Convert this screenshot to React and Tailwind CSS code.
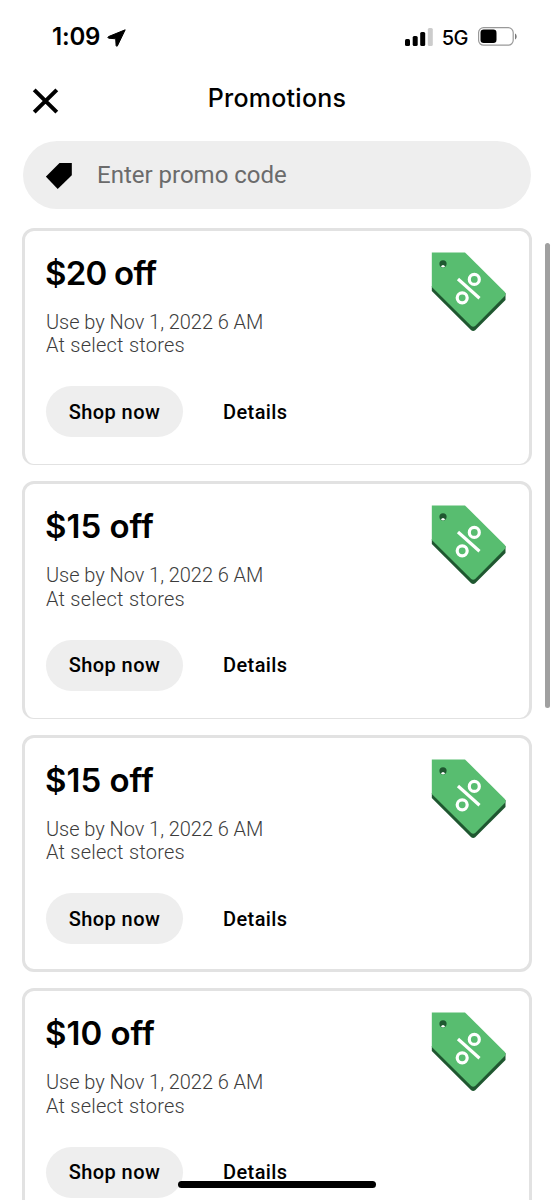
import { clsx } from 'clsx';

const promos = [
    { id: 1, title: '$20 off', tracking: 'tracking-[-0.75px]', expires: 'Use by Nov 1, 2022 6 AM', scope: 'At select stores' },
    { id: 2, title: '$15 off', tracking: 'tracking-[0px]', expires: 'Use by Nov 1, 2022 6 AM', scope: 'At select stores' },
    { id: 3, title: '$15 off', tracking: 'tracking-[0px]', expires: 'Use by Nov 1, 2022 6 AM', scope: 'At select stores' },
    { id: 4, title: '$10 off', tracking: 'tracking-[0px]', expires: 'Use by Nov 1, 2022 6 AM', scope: 'At select stores' },
];

// --- ICONS ---
const LocationArrow = () => (
    <svg className="ml-[7px] mt-[1px] h-5 w-5" viewBox="0 0 20 20">
        <path
            d="M18.2 1.8 10.4 17.9Q9.6 18.9 9.1 17.6L8.7 10.8 1.6 10.2Q.2 9.5 1.5 8.6Z"
            stroke="#000"
            strokeWidth="1"
            strokeLinejoin="round"
        />
    </svg>
);

const SignalBars = () => (
    <svg className="h-[18px] w-7" viewBox="0 0 28 18">
        <rect x="0" y="11" width="5" height="7" rx="1.5" />
        <rect x="7.7" y="8" width="5" height="10" rx="1.5" />
        <rect x="15.2" y="4" width="5" height="14" rx="1.5" />
        <rect x="22.8" y="0" width="5" height="18" rx="1.5" fill="#cccccc" />
    </svg>
);

const Battery = () => (
    <svg className="h-[19px] w-[39px]" viewBox="0 0 39 19">
        <rect x="0.6" y="0.6" width="34.6" height="17.6" rx="5" fill="none" stroke="#999999" strokeWidth="1.2" />
        <rect x="2.5" y="2.6" width="16" height="13.4" rx="3.2" />
        <path d="M37 6.4c2.2 1 2.2 5.2 0 6.2Z" fill="#777777" />
    </svg>
);

const CloseIcon = () => (
    <svg className="h-7 w-7" viewBox="0 0 28 28" fill="none" stroke="#000" strokeWidth="4">
        <path d="M3.2 2.8 25.8 25.2M25.8 2.8 3.2 25.2" />
    </svg>
);

const TagIcon = () => (
    <svg className="h-[27px] w-[27px]" viewBox="0 0 27 27">
        <path d="M13.5 1H25.8V13.3L11.7 27-.2 14.6Z" />
    </svg>
);

const PromoTag = () => (
    <svg className="h-[81px] w-[76px] shrink-0" viewBox="0 0 76 81">
        <path d="M1.8 35V40L41.2 79.2Q43.2 80.8 45.2 79.2L75.5 49V42Z" fill="#1f5730" />
        <path d="M1.8 1.4H35L74.8 41Q76.3 43 74.8 45.1L45.2 75Q43.2 76.4 41.2 75L1.8 36Z" fill="#58bd70" />
        <circle cx="13" cy="12.8" r="3.6" fill="#1f5730" />
        <path d="M10.8 15.6Q13 12.4 15.3 15.6Q13 17.2 10.8 15.6Z" fill="#fff" />
        <g fill="none" stroke="#fff" strokeWidth="3.2">
            <circle cx="44.3" cy="28.4" r="5" />
            <circle cx="32.2" cy="46.8" r="5" />
            <path d="M28 28 49.5 47.2" />
        </g>
    </svg>
);

const StatusBar = () => (
    <div className="flex h-[73px] items-center justify-between pl-[52px] pr-[37px]">
        <div className="mt-px flex items-center">
            <span className="text-[24px] font-semibold leading-none tracking-[-0.2px]">1:09</span>
            <LocationArrow />
        </div>
        <div className="flex items-center">
            <SignalBars />
            <span className="ml-[9px] mr-[10px] mt-[2px] text-[20px] font-medium leading-none tracking-[-0.5px]">5G</span>
            <Battery />
        </div>
    </div>
);

const PromoCard = ({ promo, thinBottom }) => (
    <div
        className={clsx(
            'flex h-[237.5px] shrink-0 justify-between rounded-[12px] border-[3px] border-[#e2e2e2] pl-[21px] pr-[23px] pt-5',
            thinBottom && 'border-b-[1.5px]',
        )}
    >
        <div>
            <h2 className={clsx('-ml-px mt-0.5 h-10 whitespace-nowrap text-[33px] font-semibold leading-10', promo.tracking)}>
                {promo.title}
            </h2>
            <div className="mt-[18px] whitespace-nowrap font-['Roboto',sans-serif] text-[20px] font-light leading-[23.7px] text-[#3c3c3c]">
                <p className="tracking-[-0.05px]">{promo.expires}</p>
                <p className="tracking-[0.23px]">{promo.scope}</p>
            </div>
            <div className="mt-[28px] flex items-center">
                <button className="h-[51px] w-[137px] rounded-full bg-[#eeeeee] font-['Roboto',sans-serif] text-[20px] font-medium tracking-[0.4px]">
                    Shop now
                </button>
                <button className="ml-10 font-['Roboto',sans-serif] text-[20px] font-medium tracking-[0.4px]">Details</button>
            </div>
        </div>
        <PromoTag />
    </div>
);

export default function App() {
    return (
        <div className="relative h-[1200px] w-full overflow-hidden bg-white font-['Inter',sans-serif] text-black">
            <StatusBar />
            <header className="grid h-[68px] grid-cols-[1fr_auto_1fr] items-start pl-[31px] pr-[31px]">
                <button aria-label="Close" className="mt-[14px] w-7">
                    <CloseIcon />
                </button>
                <h1 className="mt-[9px] text-[25px] font-medium leading-8 tracking-[0.25px]">Promotions</h1>
            </header>
            <div className="mx-[23px] flex h-[68px] items-center rounded-full bg-[#eeeeee] pl-[23px]">
                <TagIcon />
                <span className="ml-6 font-['Roboto',sans-serif] text-[24px] text-[#6b6b6b]">Enter promo code</span>
            </div>
            <main className="mx-[22px] mt-[18.6px] flex flex-col gap-4">
                {promos.map((promo, i) => (
                    <PromoCard key={promo.id} promo={promo} thinBottom={i < 2} />
                ))}
            </main>
            {/* scroll indicator and home bar float over the list */}
            <div className="absolute right-[4px] top-[243px] h-[465px] w-[5px] rounded-full bg-[#a0a0a0]" />
            <div className="absolute left-[178px] top-[1181px] h-[7px] w-[198px] rounded-full bg-black" />
        </div>
    );
}
